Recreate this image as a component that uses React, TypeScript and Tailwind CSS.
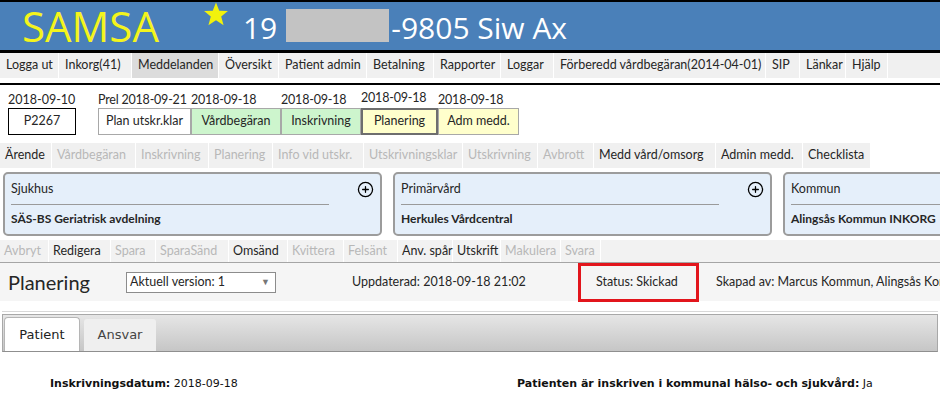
import React from "react";
import { CirclePlus } from "lucide-react";

const ui = { fontFamily: 'Lato, "Open Sans", sans-serif' };
const head = { fontFamily: '"Open Sans", "Noto Sans", sans-serif' };
const verdana = { fontFamily: '"DejaVu Sans", Verdana, sans-serif' };

const menu = [
  { label: "Logga ut", w: "w-[59px]" },
  { label: "Inkorg(41)", w: "w-[73px]" },
  { label: "Meddelanden", w: "w-[87px]", active: true },
  { label: "Översikt", w: "w-[60px]" },
  { label: "Patient admin", w: "w-[88px]" },
  { label: "Betalning", w: "w-[67px]" },
  { label: "Rapporter", w: "w-[67px]" },
  { label: "Loggar", w: "w-[53px]" },
  { label: "Förberedd vårdbegäran(2014-04-01)", w: "w-[212px]" },
  { label: "SIP", w: "w-[34px]" },
  { label: "Länkar", w: "w-[46px]" },
  { label: "Hjälp", w: "w-[42px]" },
];

const steps = [
  { date: "Prel 2018-09-21", label: "Plan utskr.klar", w: "w-[93px]", box: "bg-white border-[#a8a8a8]" },
  { date: "2018-09-18", label: "Vårdbegäran", w: "w-[90px]", box: "bg-[#cdf5cd] border-[#a8a8a8]" },
  { date: "2018-09-18", label: "Inskrivning", w: "w-[80px]", box: "bg-[#cdf5cd] border-[#a8a8a8]" },
  { date: "2018-09-18", label: "Planering", w: "w-[77px]", box: "bg-[#ffffcc] border-2 border-[#6e6e6e]", up: true },
  { date: "2018-09-18", label: "Adm medd.", w: "w-[81px]", box: "bg-[#ffffcc] border-[#a8a8a8]" },
];

const caseTabs = [
  { label: "Ärende", w: "w-[52px]" },
  { label: "Vårdbegäran", w: "w-[84px]", off: true },
  { label: "Inskrivning", w: "w-[73px]", off: true },
  { label: "Planering", w: "w-[64px]", off: true },
  { label: "Info vid utskr.", w: "w-[91px]", off: true },
  { label: "Utskrivningsklar", w: "w-[99px]", off: true },
  { label: "Utskrivning", w: "w-[75px]", off: true },
  { label: "Avbrott", w: "w-[56px]", off: true },
  { label: "Medd vård/omsorg", w: "w-[122px]" },
  { label: "Admin medd.", w: "w-[87px]" },
  { label: "Checklista", w: "w-[68px]" },
];

const actions = [
  { label: "Avbryt", w: "w-[49px]", off: true },
  { label: "Redigera", w: "w-[62px]" },
  { label: "Spara", w: "w-[45px]", off: true },
  { label: "SparaSänd", w: "w-[73px]", off: true },
  { label: "Omsänd", w: "w-[59px]" },
  { label: "Kvittera", w: "w-[56px]", off: true },
  { label: "Felsänt", w: "w-[54px]", off: true },
  { label: "Anv. spår", w: "w-[55px]" },
  { label: "Utskrift", w: "w-[48px]" },
  { label: "Makulera", w: "w-[60px]", off: true },
  { label: "Svara", w: "w-[40px]", off: true },
];

const units = [
  { title: "Sjukhus", name: "SÄS-BS Geriatrisk avdelning" },
  { title: "Primärvård", name: "Herkules Vårdcentral" },
  { title: "Kommun", name: "Alingsås Kommun INKORG" },
];

function Star() {
  return (
    <svg width="26" height="25" viewBox="0 0 24 23" className="mb-[20px] ml-[44px] mr-[14px]">
      <polygon
        points="12,0.5 15,8 23,8.3 16.8,13.4 19,21.5 12,16.9 5,21.5 7.2,13.4 1,8.3 9,8"
        fill="#f2f20c"
      />
    </svg>
  );
}

export default function App() {
  return (
    <div className="w-[940px] h-[393px] overflow-hidden bg-white text-[#262626] whitespace-nowrap" style={ui}>
      {/* Header */}
      <div className="h-[53px] border-t-2 border-b-[3px] border-black bg-[#4a80b9] flex items-end pb-[3px]" style={head}>
        <span className="ml-[22px] text-[42px] leading-none text-[#f4f41c]">SAMSA</span>
        <Star />
        <span className="text-[30px] leading-none text-white mb-[4px]">19</span>
        <span className="ml-[9px] mb-[5px] w-[103px] h-[33px] bg-[#c3c3c3]" />
        <span className="ml-[2px] text-[30px] leading-none text-white mb-[4px]">-9805 Siw Ax</span>
      </div>

      {/* Top menu */}
      <div className="flex h-[25px] bg-[#f0f0f0] text-[12.5px]">
        {menu.map((m) => (
          <div
            key={m.label}
            className={`${m.w} shrink-0 border-r border-white px-[6px] flex items-center ${m.active ? "bg-[#dcdcdc]" : ""}`}
          >
            {m.label}
          </div>
        ))}
      </div>
      <div className="h-[5px]" />
      <div className="h-[2px] bg-black" />

      {/* Status steps */}
      <div className="flex items-end px-[8px] pt-[6px] text-[12.5px]">
        <div className="flex flex-col w-[90px] shrink-0">
          <span className="leading-[17px]">2018-09-10</span>
          <div className="w-[68px] h-[27px] border border-black flex items-center justify-center">P2267</div>
        </div>
        {steps.map((s) => (
          <div key={s.label} className={`flex flex-col shrink-0 ${s.w}`}>
            <span className={`leading-[17px] tracking-[-0.2px] ${s.up ? "-mt-[2px] mb-[2px]" : ""}`}>{s.date}</span>
            <div className={`h-[27px] border flex items-center justify-center ${s.box}`}>{s.label}</div>
          </div>
        ))}
      </div>

      {/* Case tabs */}
      <div className="flex h-[25px] mt-[8px] text-[12.5px]">
        {caseTabs.map((t) => (
          <div
            key={t.label}
            className={`${t.w} shrink-0 bg-[#f0f0f0] border-r border-white px-[5px] flex items-center ${t.off ? "text-[#b8b8b8]" : ""}`}
          >
            {t.label}
          </div>
        ))}
      </div>

      {/* Unit cards */}
      <div className="flex gap-[11px] pl-[3px] mt-[4px] text-[12.5px]">
        {units.map((u, i) => (
          <div
            key={u.title}
            className="w-[379px] h-[64px] shrink-0 rounded-[5px] border-2 border-[#9c9c9c] bg-[#e5effa] pl-[6px] pr-[5px] pt-[6px] flex flex-col"
          >
            <div className="flex items-start justify-between">
              <div className="flex flex-col w-[318px]">
                <span className="leading-[18px]">{u.title}</span>
                <div className="h-px bg-[#9a9a9a] mt-[6px]" />
              </div>
              {i < 2 && <CirclePlus className="w-[17px] h-[17px] mt-[1px] mr-[1px] text-black" strokeWidth={1.8} />}
            </div>
            <span className="font-bold text-[12px] leading-[18px] mt-[5px]">{u.name}</span>
          </div>
        ))}
      </div>

      {/* Actions */}
      <div className="flex h-[23px] mt-[4px] bg-[#f2f2f2] border-b border-[#a5a5a5] text-[12.5px]">
        {actions.map((a) => (
          <div
            key={a.label}
            className={`${a.w} shrink-0 border-r border-white px-[4px] flex items-center ${a.off ? "text-[#b8b8b8]" : ""}`}
          >
            {a.label}
          </div>
        ))}
      </div>

      {/* Planering bar */}
      <div className="flex items-center h-[38px] bg-[#f5f5f5] text-[12.5px]">
        <span className="ml-[8px] w-[118px] shrink-0 text-[20px] leading-none">Planering</span>
        <div className="w-[150px] h-[21px] shrink-0 border border-[#8c8c8c] bg-white flex items-center justify-between pl-[3px] pr-[5px]">
          <span>Aktuell version: 1</span>
          <span className="text-[#777] text-[9px]">▼</span>
        </div>
        <span className="ml-[76px] w-[226px] shrink-0">Uppdaterad: 2018-09-18 21:02</span>
        <div className="w-[121px] h-[39px] shrink-0 border-[3px] border-[#e2151c] flex items-center pl-[15px]">
          Status: Skickad
        </div>
        <span className="ml-[17px]">Skapad av: Marcus Kommun, Alingsås Kom</span>
      </div>

      {/* Content tabs */}
      <div className="h-px bg-[#d8d8d8] mt-[10px] mx-[2px]" />
      <div className="mt-[2px] mx-[2px] h-[38px] border border-[#a8a8a8] border-b-[#8f8f8f] bg-gradient-to-b from-[#e6e6e6] to-[#c6c6c6] flex items-end pl-[1px] gap-[4px] text-[13px]" style={verdana}>
        <div className="w-[76px] h-[34px] bg-white border border-[#b5b5b5] border-b-0 rounded-t-[4px] flex items-center justify-center text-[#222]">
          Patient
        </div>
        <div className="w-[72px] h-[32px] bg-[#efefef] rounded-t-[3px] flex items-center justify-center text-[#444]">
          Ansvar
        </div>
      </div>

      {/* Content */}
      <div className="flex mt-[24px] text-[11px] text-[#111]" style={verdana}>
        <div className="ml-[50px] w-[467px] shrink-0">
          <span className="font-bold">Inskrivningsdatum:</span> 2018-09-18
        </div>
        <div>
          <span className="font-bold">Patienten är inskriven i kommunal hälso- och sjukvård:</span> Ja
        </div>
      </div>
    </div>
  );
}
